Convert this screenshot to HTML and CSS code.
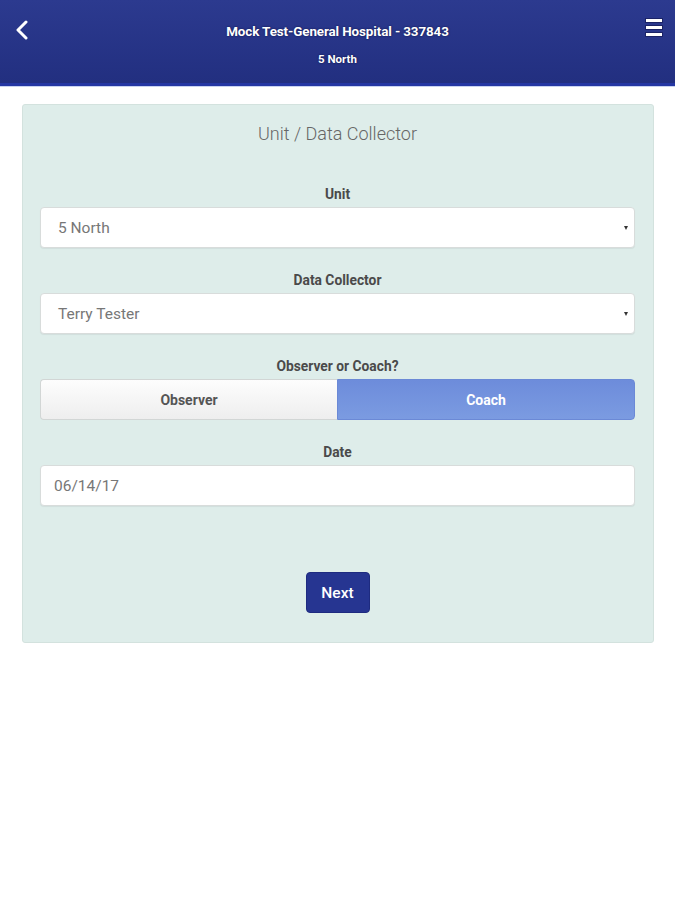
FILE: index.html
```html
<!DOCTYPE html>
<html>
<head>
<meta charset="utf-8">
<link rel="stylesheet" href="styles.css">
</head>
<body>
<header class="topbar">
  <button class="icon-btn back" aria-label="Back">
    <svg width="14" height="20" viewBox="0 0 14 20"><path d="M11 2 L3 10 L11 18" fill="none" stroke="#fff" stroke-width="3" stroke-linecap="round" stroke-linejoin="round"/></svg>
  </button>
  <div class="titles">
    <div class="title">Mock Test-General Hospital - 337843</div>
    <div class="subtitle">5 North</div>
  </div>
  <button class="icon-btn menu" aria-label="Menu">
    <span></span><span></span><span></span>
  </button>
</header>

<main class="panel">
  <h1 class="panel-title">Unit / Data Collector</h1>

  <div class="field">
    <label class="label">Unit</label>
    <div class="select"><span>5 North</span><i class="caret"></i></div>
  </div>

  <div class="field">
    <label class="label">Data Collector</label>
    <div class="select"><span>Terry Tester</span><i class="caret"></i></div>
  </div>

  <div class="field">
    <label class="label">Observer or Coach?</label>
    <div class="segmented">
      <div class="seg">Observer</div>
      <div class="seg active">Coach</div>
    </div>
  </div>

  <div class="field">
    <label class="label">Date</label>
    <div class="input">06/14/17</div>
  </div>

  <div class="actions">
    <button class="next">Next</button>
  </div>
</main>
</body>
</html>
```

FILE: styles.css
```css
* { box-sizing: border-box; }
html, body { margin: 0; padding: 0; background: #fff; }
body { font-family: Roboto, "Liberation Sans", Arial, sans-serif; }

.topbar {
  height: 86px;
  display: flex;
  align-items: flex-start;
  justify-content: space-between;
  background: linear-gradient(#2c3a8f, #222f80);
  border-bottom: 3px solid #2537a3;
  box-shadow: 0 1px 0 #c9d3f0;
  color: #fff;
  padding: 0 12px 0 14px;
}
.icon-btn { background: none; border: 0; padding: 0; cursor: pointer; }
.back { margin-top: 19px; width: 16px; height: 22px; display: flex; align-items: center; justify-content: center; }
.menu {
  margin-top: 18px;
  width: 18px;
  display: flex;
  flex-direction: column;
  gap: 2px;
}
.menu span { display: block; height: 3px; background: #fff; border: 1px solid #1b2366; box-sizing: content-box; width: 16px; }
.titles { flex: 1; text-align: center; padding-top: 24px; }
.title { font-size: 13.4px; font-weight: 700; line-height: 16px; letter-spacing: -0.1px; text-shadow: 0 0 2px #0b1040; }
.subtitle { font-size: 11.5px; font-weight: 700; line-height: 14px; margin-top: 12px; text-shadow: 0 0 2px #0b1040; }

.panel {
  margin: 18px 21px 0 22px;
  background: #deedea;
  border: 1px solid #d3e2de;
  border-radius: 3px;
  padding: 17px 18px 29px 17px;
  display: flex;
  flex-direction: column;
}
.panel-title {
  margin: 0 0 41px;
  text-align: center;
  font-size: 18px;
  font-weight: 300;
  line-height: 24px;
  color: #666;
}
.field { display: flex; flex-direction: column; margin-bottom: 25px; }
.label {
  text-align: center;
  font-size: 13.8px;
  font-weight: 700;
  color: #4a4a4a;
  line-height: 14px;
  margin-bottom: 6px;
}
.select, .input {
  height: 41px;
  background: #fff;
  border: 1px solid #d8dcdb;
  border-radius: 4px;
  display: flex;
  align-items: center;
  font-size: 15.5px;
  font-weight: 400;
  color: #777;
  box-shadow: 0 1px 1px rgba(0,0,0,0.06);
}
.select { padding: 0 6px 0 17px; justify-content: space-between; }
.input { padding: 0 13px; }
.caret {
  width: 0; height: 0;
  border-left: 2.5px solid transparent;
  border-right: 2.5px solid transparent;
  border-top: 4px solid #333;
}
.segmented { display: flex; height: 41px; }
.seg {
  flex: 1;
  display: flex;
  align-items: center;
  justify-content: center;
  font-size: 14px;
  font-weight: 700;
  color: #555;
  background: linear-gradient(#fdfdfd, #eeeeee);
  border: 1px solid #d2d6d5;
  border-right: 0;
  border-radius: 4px 0 0 4px;
}
.seg.active {
  color: #fff;
  font-size: 14px;
  background: linear-gradient(#6d8cdb, #7b9be1);
  border: 1px solid #6b89d6;
  border-radius: 0 4px 4px 0;
}
.actions { display: flex; justify-content: center; margin-top: 41px; }
.next {
  width: 64px;
  height: 41px;
  background: #263591;
  color: #fff;
  border: 1px solid #1e2b80;
  border-radius: 4px;
  font-family: Roboto, "Liberation Sans", Arial, sans-serif;
  font-size: 15.5px;
  font-weight: 500;
  padding: 0;
}
```
